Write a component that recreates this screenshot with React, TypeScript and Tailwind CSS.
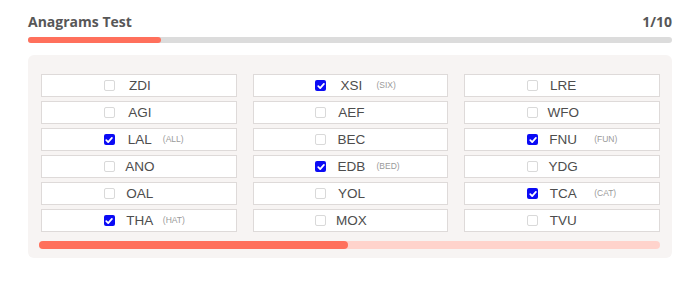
import React from "react";

type Item = { w: string; hint?: string; checked?: boolean };

const cols: Item[][] = [
  [
    { w: "ZDI" },
    { w: "AGI" },
    { w: "LAL", hint: "(ALL)", checked: true },
    { w: "ANO" },
    { w: "OAL" },
    { w: "THA", hint: "(HAT)", checked: true },
  ],
  [
    { w: "XSI", hint: "(SIX)", checked: true },
    { w: "AEF" },
    { w: "BEC" },
    { w: "EDB", hint: "(BED)", checked: true },
    { w: "YOL" },
    { w: "MOX" },
  ],
  [
    { w: "LRE" },
    { w: "WFO" },
    { w: "FNU", hint: "(FUN)", checked: true },
    { w: "YDG" },
    { w: "TCA", hint: "(CAT)", checked: true },
    { w: "TVU" },
  ],
];

const hintPad = ["pl-[1px]", "pl-[3px]", "pl-[9px]"];

function Box({ checked }: { checked?: boolean }) {
  if (checked) {
    return (
      <span className="flex h-[11px] w-[11px] items-center justify-center rounded-[2px] bg-[#0b0bf5]">
        <svg width="8" height="8" viewBox="0 0 10 10">
          <path d="M1.6 5.2 L4 7.6 L8.6 2.4" fill="none" stroke="white" strokeWidth="2.2" strokeLinecap="round" strokeLinejoin="round" />
        </svg>
      </span>
    );
  }
  return <span className="h-[11px] w-[11px] rounded-[2px] border border-[#d9d9d9] bg-white" />;
}

function Row({ item, col }: { item: Item; col: number }) {
  return (
    <div className="grid h-[23px] grid-cols-[1fr_46px_1fr] items-center border border-[#dedad9] bg-white">
      <div className="flex justify-end pr-[1px]">
        <Box checked={item.checked} />
      </div>
      <div className="pl-[2px] text-center text-[13.5px] leading-none text-[#4d4d4d]">{item.w}</div>
      <div className={`${hintPad[col]} text-[8.5px] leading-none text-[#9a9a9a]`}>{item.hint}</div>
    </div>
  );
}

export default function App() {
  return (
    <div
      className="h-[306px] w-[700px] bg-white px-[28px] pt-[11px]"
      style={{ fontFamily: '"Liberation Sans", Arial, sans-serif' }}
    >
      <div
        className="flex h-[20px] items-center justify-between text-[14px] font-bold text-[#575757]"
        style={{ fontFamily: '"Open Sans", "Liberation Sans", sans-serif' }}
      >
        <span>Anagrams Test</span>
        <span>1/10</span>
      </div>
      <div className="mt-[6px] h-[6px] w-full rounded-full bg-[#dcdcdc]">
        <div className="h-full w-[133px] rounded-full bg-[#ff705c]" />
      </div>
      <div className="mt-[12px] rounded-[6px] bg-[#f7f4f3] pb-[9px] pl-[13px] pr-[12px] pt-[19px]">
        <div className="grid grid-cols-3 gap-x-[16px]">
          {cols.map((col, i) => (
            <div key={i} className="flex flex-col gap-[4px]">
              {col.map((it) => (
                <Row key={it.w} item={it} col={i} />
              ))}
            </div>
          ))}
        </div>
        <div className="ml-[-2px] mt-[9px] h-[8px] rounded-full bg-[#ffd3cc]">
          <div className="h-full w-[309px] rounded-full bg-[#ff705c]" />
        </div>
      </div>
    </div>
  );
}
